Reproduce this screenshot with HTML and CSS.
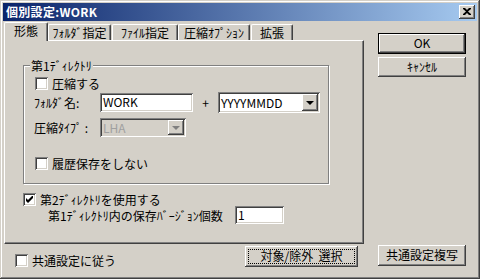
FILE: index.html
```html
<html>
<head>
  <meta charset="UTF-8">
  <title>個別設定</title>
  <link rel="stylesheet" href="styles.css">
</head>
<body>

<div class="window">
  <div class="titlebar">
    <span class="title">個別設定:WORK</span>
    <span class="close raised">
      <svg width="8" height="7" viewBox="0 0 8 7"><path d="M0 0h2l2 2 2-2h2v1L5 3.5 8 6v1H6L4 5 2 7H0V6l3-2.5L0 1z" fill="#000"/></svg>
    </span>
  </div>

  <div class="client">
    <div class="main">
      <div class="tabs">
        <div class="tab active t1">形態</div>
        <div class="tab t2">ﾌｫﾙﾀﾞ指定</div>
        <div class="tab t3">ﾌｧｲﾙ指定</div>
        <div class="tab t4">圧縮ｵﾌﾟｼｮﾝ</div>
        <div class="tab t5">拡張</div>
      </div>

      <div class="panel">
        <div class="group">
          <div class="legend">第1ﾃﾞｨﾚｸﾄﾘ</div>
          <div class="check row1"><span class="box"></span>圧縮する</div>
          <div class="row row2">
            <span class="lbl">ﾌｫﾙﾀﾞ名:</span>
            <span class="edit name">WORK</span>
            <span class="plus">+</span>
            <span class="combo fmt">
              <span class="val">YYYYMMDD</span>
              <span class="drop raised"><i class="arrow"></i></span>
            </span>
          </div>
          <div class="row row3">
            <span class="lbl">圧縮ﾀｲﾌﾟ :</span>
            <span class="combo type disabled">
              <span class="val">LHA</span>
              <span class="drop raised"><i class="arrow"></i></span>
            </span>
          </div>
          <div class="check row4"><span class="box"></span>履歴保存をしない</div>
        </div>

        <div class="check second">
          <span class="box checked">
            <svg width="7" height="7" viewBox="0 0 7 7"><path d="M0 2l2 2 5-5v3l-5 5-2-2z" fill="#000"/></svg>
          </span>第2ﾃﾞｨﾚｸﾄﾘを使用する
        </div>
        <div class="row count">
          <span class="lbl">第1ﾃﾞｨﾚｸﾄﾘ内の保存ﾊﾞｰｼﾞｮﾝ個数</span>
          <span class="edit num">1</span>
        </div>
      </div>
    </div>

    <div class="side">
      <div class="btn default">OK</div>
      <div class="btn raised cancel">ｷｬﾝｾﾙ</div>
    </div>

    <div class="foot-left">
      <div class="check common"><span class="box"></span>共通設定に従う</div>
      <div class="btn raised select"><span class="focus">対象/除外&nbsp;&nbsp;選択</span></div>
    </div>
    <div class="foot-right">
      <div class="btn raised">共通設定複写</div>
    </div>
  </div>
</div>

</body>
</html>
```

FILE: styles.css
```css
body { margin:0; font: 12px/14px "Noto Sans CJK JP", sans-serif; color:#000; background:#d4d0c8; }

.window {
  width:480px; height:279px; box-sizing:border-box; padding:3px;
  background:#d4d0c8;
  box-shadow: inset -1px -1px 0 #404040, inset 1px 1px 0 #d4d0c8,
              inset -2px -2px 0 #808080, inset 2px 2px 0 #fff;
}

.raised {
  background:#d4d0c8;
  box-shadow: inset -1px -1px 0 #404040, inset 1px 1px 0 #fff,
              inset -2px -2px 0 #808080, inset 2px 2px 0 #d4d0c8;
}

/* title bar */
.titlebar {
  height:18px; display:flex; align-items:center; padding:0 2px 0 3px;
  background: linear-gradient(to right, #0a246a, #a6caf0);
}
.title { color:#fff; font-weight:bold; font-size:12px; letter-spacing:0.3px; }
.close {
  margin-left:auto; width:16px; height:14px; box-sizing:border-box;
  display:flex; align-items:center; justify-content:center; padding:0 1px 1px 0;
}

/* layout */
.client {
  display:grid; grid-template-columns:360px 88px; grid-template-rows:223px 1fr;
  column-gap:14px; padding-left:1px;
}

/* tabs */
.tabs { height:19px; display:flex; align-items:flex-end; }
.tab {
  height:16px; box-sizing:border-box; text-align:center; line-height:15px;
  border-top:1px solid #fff; border-left:1px solid #fff; border-right:1px solid #404040;
  border-radius:2px 2px 0 0; box-shadow: inset -1px 0 0 #808080;
}
.tab.active {
  height:19px; margin-bottom:-1px; position:relative; z-index:1;
  background:#d4d0c8; line-height:16px;
}
.t1 { width:44px; }
.t2 { width:63px; }
.t3 { width:66px; margin-left:1px; }
.t4 { width:72px; }
.t5 { width:42px; margin-left:1px; }

.panel {
  height:204px; box-sizing:border-box; padding:0 0 0 18px;
  border-top:1px solid #fff; border-left:1px solid #fff;
  border-right:1px solid #404040; border-bottom:1px solid #404040;
  box-shadow: inset -1px -1px 0 #808080;
}

/* group box */
.group {
  width:306px; height:119px; box-sizing:border-box; margin-top:24px;
  border:1px solid #808080; box-shadow: inset 1px 1px 0 #fff, 1px 1px 0 #fff;
  display:flex; flex-direction:column;
}
.legend {
  align-self:flex-start; margin:-7px 0 0 6px; padding:0 1px;
  background:#d4d0c8; line-height:14px;
}

.check { display:flex; align-items:center; height:13px; line-height:13px; white-space:nowrap; }
.box {
  width:13px; height:13px; box-sizing:border-box; background:#fff; margin-right:4px;
  display:flex; align-items:center; justify-content:center;
  box-shadow: inset 1px 1px 0 #808080, inset -1px -1px 0 #fff,
              inset 2px 2px 0 #404040, inset -2px -2px 0 #d4d0c8;
}
.row1 { margin:4px 0 0 11px; }
.row4 { margin:20px 0 0 11px; }

.row { display:flex; align-items:center; white-space:nowrap; }
.row2 { margin:2px 0 0 10px; height:21px; }
.row3 { margin:5px 0 0 10px; height:19px; }
.lbl { width:66px; }

.edit {
  background:#fff; box-sizing:border-box; padding:2px 0 0 3px; line-height:14px;
  box-shadow: inset 1px 1px 0 #808080, inset -1px -1px 0 #fff,
              inset 2px 2px 0 #404040, inset -2px -2px 0 #d4d0c8;
}
.name { width:93px; height:19px; }
.plus { width:25px; text-align:center; }

.combo {
  display:flex; align-items:center; box-sizing:border-box; background:#fff; padding:2px;
  box-shadow: inset 1px 1px 0 #808080, inset -1px -1px 0 #fff,
              inset 2px 2px 0 #404040, inset -2px -2px 0 #d4d0c8;
}
.combo .val { flex:1; padding-left:1px; }
.fmt { width:102px; height:21px; }
.type { width:86px; height:19px; }
.drop {
  width:16px; height:100%; display:flex; align-items:center; justify-content:center;
}
.arrow {
  width:0; height:0; border-left:4px solid transparent; border-right:4px solid transparent;
  border-top:4px solid #000; margin-top:1px;
}
.disabled { background:#d4d0c8; color:#a0a0a0; }
.disabled .arrow { border-top-color:#808080; }

.second { margin:9px 0 0 0; }
.count { margin:0 0 0 25px; height:18px; }
.count .lbl { width:187px; line-height:12px; padding-top:2px; }
.num { width:49px; height:18px; padding-top:2px; }

/* buttons */
.side { padding-top:12px; display:flex; flex-direction:column; gap:3px; }
.btn {
  height:21px; box-sizing:border-box; text-align:center; line-height:20px; white-space:nowrap;
}
.default {
  background:#d4d0c8; border:1px solid #000;
  box-shadow: inset -1px -1px 0 #404040, inset 1px 1px 0 #fff,
              inset -2px -2px 0 #808080, inset 2px 2px 0 #d4d0c8;
  line-height:18px;
}
.cancel { height:20px; line-height:19px; }

.foot-left {
  display:flex; align-items:flex-start; justify-content:space-between;
  padding:2px 6px 0 11px;
}
.common { margin-top:8px; }
.select { width:113px; padding:3px; }
.select .focus {
  display:block; height:15px; line-height:14px; outline:1px dotted #000; outline-offset:-1px;
}
.foot-right { padding-top:1px; }
```
